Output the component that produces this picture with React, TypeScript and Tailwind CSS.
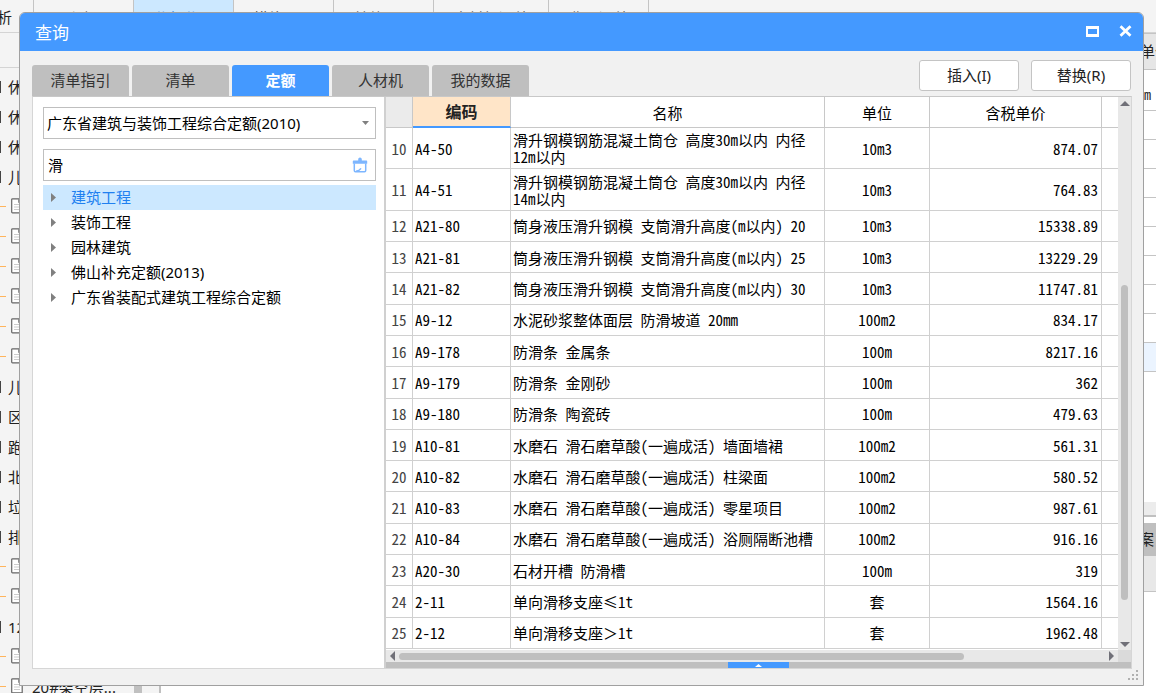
import { useState } from "react";

const UI = "font-['Noto_Sans','Noto_Sans_CJK_SC',sans-serif]";
const MONO = "font-['Noto_Sans_Mono_CJK_SC','Noto_Sans_CJK_SC',monospace]";

const tabs = ["清单指引", "清单", "定额", "人材机", "我的数据"];
const tree = ["建筑工程", "装饰工程", "园林建筑", "佛山补充定额(2013)", "广东省装配式建筑工程综合定额"];

type Row = { n: number; code: string; name: string; unit: string; price: string };
const rows: Row[] = [
  { n: 10, code: "A4-50", name: "滑升钢模钢筋混凝土筒仓 高度30m以内 内径12m以内", unit: "10m3", price: "874.07" },
  { n: 11, code: "A4-51", name: "滑升钢模钢筋混凝土筒仓 高度30m以内 内径14m以内", unit: "10m3", price: "764.83" },
  { n: 12, code: "A21-80", name: "筒身液压滑升钢模 支筒滑升高度(m以内) 20", unit: "10m3", price: "15338.89" },
  { n: 13, code: "A21-81", name: "筒身液压滑升钢模 支筒滑升高度(m以内) 25", unit: "10m3", price: "13229.29" },
  { n: 14, code: "A21-82", name: "筒身液压滑升钢模 支筒滑升高度(m以内) 30", unit: "10m3", price: "11747.81" },
  { n: 15, code: "A9-12", name: "水泥砂浆整体面层 防滑坡道 20mm", unit: "100m2", price: "834.17" },
  { n: 16, code: "A9-178", name: "防滑条 金属条", unit: "100m", price: "8217.16" },
  { n: 17, code: "A9-179", name: "防滑条 金刚砂", unit: "100m", price: "362" },
  { n: 18, code: "A9-180", name: "防滑条 陶瓷砖", unit: "100m", price: "479.63" },
  { n: 19, code: "A10-81", name: "水磨石 滑石磨草酸(一遍成活) 墙面墙裙", unit: "100m2", price: "561.31" },
  { n: 20, code: "A10-82", name: "水磨石 滑石磨草酸(一遍成活) 柱梁面", unit: "100m2", price: "580.52" },
  { n: 21, code: "A10-83", name: "水磨石 滑石磨草酸(一遍成活) 零星项目", unit: "100m2", price: "987.61" },
  { n: 22, code: "A10-84", name: "水磨石 滑石磨草酸(一遍成活) 浴厕隔断池槽", unit: "100m2", price: "916.16" },
  { n: 23, code: "A20-30", name: "石材开槽 防滑槽", unit: "100m", price: "319" },
  { n: 24, code: "2-11", name: "单向滑移支座≤1t", unit: "套", price: "1564.16" },
  { n: 25, code: "2-12", name: "单向滑移支座＞1t", unit: "套", price: "1962.48" },
];

const projectTabs = [
  { label: "工程概况", width: "w-[100px]" },
  { label: "分部分项", width: "w-[100px]" },
  { label: "措施项目", width: "w-[100px]" },
  { label: "其他项目", width: "w-[100px]" },
  { label: "人材机汇总", width: "w-[115px]" },
  { label: "费用汇总", width: "w-[100px]" },
];

const projectTree = [
  "休", "休", "休", "儿", "", "", "", "", "", "", "儿", "区", "跑", "北", "垃", "排", "", "", "12#", "",
];

function Arrow({ className, points }: { className: string; points: string }) {
  return (
    <svg className={className} viewBox="0 0 10 10" preserveAspectRatio="none" aria-hidden="true">
      <polygon points={points} fill="currentColor" />
    </svg>
  );
}

function DocIcon() {
  return (
    <svg className="h-4 w-3 shrink-0" viewBox="0 0 12 16" fill="none" aria-hidden="true">
      <path d="M1.5 .8h6.2l3.5 3.5v10.6H1.5a.8.8 0 0 1-.8-.8V1.6a.8.8 0 0 1 .8-.8Z" fill="#fff" stroke="#666" strokeWidth="1.2" />
      <path d="M7.6 1v3.6h3.5" stroke="#888" />
      <path d="M3 6.5h6M3 9h6M3 11.5h6" stroke="#ccc" />
    </svg>
  );
}

function BrushIcon() {
  return (
    <svg className="h-4 w-4" viewBox="0 0 16 16" fill="none" aria-hidden="true">
      <path d="M6.2 3.6V2.2a1.8 1.8 0 0 1 3.6 0v1.4h4.7c.4 0 .7.3.7.7v2.5H.8V4.3c0-.4.3-.7.7-.7Z" fill="#7db6ff" />
      <path d="M2.3 6.5v7.1c0 .7.4 1.1 1.1 1.1h9.2c.7 0 1.1-.4 1.1-1.1V6.5" stroke="#7db6ff" strokeWidth="1.5" />
      <path d="M4 14.2c2.4-.3 4-1.2 5-2.8" stroke="#7db6ff" strokeWidth="1.5" />
    </svg>
  );
}

function Backdrop() {
  return (
    <div className="flex h-full flex-col bg-[#f4f4f4] text-[15px] text-[#222]">
      <div className="flex h-[33px] shrink-0 border-b border-[#d4d4d4]">
        <div className="flex w-[34px] items-center border-r border-[#c4c4c4] pt-[2px]">
          <span className="-ml-[3px]">析</span>
        </div>
        {projectTabs.map((t, i) => (
          <div
            key={t.label}
            className={`${t.width} border-r border-[#c4c4c4] pt-[10px] text-center leading-[17px] ${
              i === 1 ? "bg-[#cce8ff] text-[#1e7be8]" : "text-[#555]"
            }`}
          >
            {t.label}
          </div>
        ))}
      </div>
      <div className="flex min-h-0 grow">
        <div className="flex w-[161px] shrink-0 flex-col overflow-hidden border-r-2 border-[#c0c0c0]">
          <div className="h-[35px] shrink-0 border-b border-[#d4d4d4]" />
          <div className="h-1 shrink-0" />
          {projectTree.map((t, i) =>
            t ? (
              <div key={i} className="flex h-[30px] shrink-0 items-center gap-[7px]">
                <span className="h-3 w-px bg-[#444]" />
                <span className="leading-5">{t}</span>
              </div>
            ) : (
              <div key={i} className="flex h-[30px] shrink-0 items-center gap-[5px] pb-[2px]">
                <span className="h-px w-[6px] bg-[#ffb45c]" />
                <DocIcon />
              </div>
            ),
          )}
          <div className="flex h-[30px] shrink-0">
            <div className="flex h-[28px] grow items-center gap-[5px]">
              <span className="h-px w-[6px] bg-[#ffb45c]" />
              <DocIcon />
              <span className="ml-1 pt-[2px]">20#架空层...</span>
            </div>
            <div className="mr-[17px] w-[8px] bg-[#c0c0c0]" />
          </div>
        </div>
        <div className="grow bg-white" />
        <div className="flex w-[14px] shrink-0 flex-col overflow-hidden bg-white">
          <div className="flex h-[37px] shrink-0 items-center border-y border-[#c4c4c4] bg-[#e6e6e6] whitespace-nowrap">
            <span className="-ml-[2px]">单位</span>
          </div>
          <div className={`flex h-[41px] shrink-0 items-center border-b border-[#c4c4c4] pl-[2px] pt-2 text-sm ${MONO}`}>m</div>
          {[0, 1, 2, 3, 4, 5, 6, 7].map((i) => (
            <div key={i} className="h-[29px] shrink-0 border-b border-[#c4c4c4]" />
          ))}
          <div className="h-[29px] shrink-0 border-b border-[#c4c4c4] bg-[#ebf4ff]" />
          <div className="h-[130px] shrink-0" />
          <div className="h-[15px] shrink-0 border-b-2 border-[#c0c0c0] bg-[#ececec]" />
          <div className="h-[6px] shrink-0" />
          <div className="flex h-[33px] shrink-0 items-center bg-[#bfbfbf]">
            <span className="-ml-[3px]">案</span>
          </div>
          <div className="h-[36px] shrink-0 border-b border-[#c4c4c4] bg-[#e8e8e8]" />
        </div>
      </div>
    </div>
  );
}

function QuotaTable() {
  const th = "border-r border-b border-[#c8c8c8] p-0 font-normal";
  const td = "border-r border-b border-[#d0d0d0]";
  return (
    <table className={`h-full w-full table-fixed border-separate border-spacing-0 bg-white text-[15px] leading-[17px] text-black ${MONO}`}>
      <colgroup>
        <col className="w-[27px]" />
        <col className="w-[98px]" />
        <col />
        <col className="w-[105px]" />
        <col className="w-[172px]" />
        <col className="w-4" />
      </colgroup>
      <thead>
        <tr className="h-[31px]">
          <th className={`${th} bg-[#ebebeb]`} aria-label="序号" />
          <th className="border-r border-b-2 border-r-[#c8c8c8] border-b-[#4499ff] bg-[#ffe5c8] p-0 text-base leading-[17px] font-bold text-[#222]">编码</th>
          <th className={th}>名称</th>
          <th className={th}>单位</th>
          <th className={th}>含税单价</th>
          <th className="border-b border-[#c8c8c8] p-0" aria-label="更多" />
        </tr>
      </thead>
      <tbody>
        {rows.map((r, i) => (
          <tr key={r.n} className={i < 2 ? "h-[41px]" : "h-[31px]"}>
            <td className={`${td} p-0 text-center text-[#444]`}>{r.n}</td>
            <td className={`${td} py-0 pr-0 pl-[2px]`}>{r.code}</td>
            <td className={`${td} py-0 pr-2 pl-[2px]`}>{r.name}</td>
            <td className={`${td} p-0 text-center`}>{r.unit}</td>
            <td className={`${td} py-0 pr-[3px] pl-0 text-right`}>{r.price}</td>
            <td className="border-b border-[#d0d0d0] p-0" />
          </tr>
        ))}
      </tbody>
    </table>
  );
}

export default function App() {
  const [tab, setTab] = useState("定额");
  const [node, setNode] = useState("建筑工程");
  const [query, setQuery] = useState("滑");

  return (
    <div className={`relative h-screen overflow-hidden ${UI}`}>
      <Backdrop />
      <section
        role="dialog"
        aria-labelledby="dialog-title"
        className="absolute top-3 right-3 bottom-[7px] left-[19px] flex flex-col overflow-hidden rounded-t-md border border-[#a0a0a0] bg-[#f1f1f1] text-[15px]"
      >
        <header className="flex h-[38px] shrink-0 items-center justify-between bg-[#4499ff] pr-[11px] pl-[15px] text-white">
          <h1 id="dialog-title" className="pt-[2px] text-[17px] leading-6">查询</h1>
          <div className="flex items-center gap-5 pb-[2px]">
            <button aria-label="最大化" className="h-[11px] w-[13px] border-[3px] border-x-2 border-white" />
            <button aria-label="关闭">
              <svg className="h-3 w-[13px]" viewBox="0 0 13 12" aria-hidden="true">
                <path d="M1.5 1.2 11.5 10.8M11.5 1.2 1.5 10.8" stroke="#fff" strokeWidth="2.8" />
              </svg>
            </button>
          </div>
        </header>

        <div className="flex h-[45px] shrink-0 items-end justify-between pr-3 pl-3">
          <div role="tablist" className="flex gap-[3px]">
            {tabs.map((t) => (
              <button
                key={t}
                role="tab"
                aria-selected={tab === t}
                onClick={() => setTab(t)}
                className={`h-[31px] w-[97px] rounded-t-[3px] pb-[2px] leading-5 ${
                  tab === t ? "bg-[#4499ff] font-bold text-white" : "bg-[#bfbfbf] text-[#333]"
                }`}
              >
                {t}
              </button>
            ))}
          </div>
          <div className="mb-[5px] flex gap-3">
            {["插入(I)", "替换(R)"].map((b) => (
              <button key={b} className="h-[31px] w-[100px] rounded-[3px] border border-[#c4c4c4] bg-white pb-[2px] leading-5 text-[#222]">
                {b}
              </button>
            ))}
          </div>
        </div>

        <main className="mr-[11px] mb-4 ml-3 flex min-h-0 grow border border-[#d6d6d6] border-t-[#c8c8c8] bg-white">
          <div className="flex w-[351px] shrink-0 flex-col pt-[10px] pr-2 pl-[10px]">
            <div className="relative shrink-0">
              <select aria-label="定额库" className="h-8 w-full appearance-none border border-[#bfbfbf] bg-white pl-[3px] text-[15px] text-black">
                <option>广东省建筑与装饰工程综合定额(2010)</option>
              </select>
              <Arrow className="pointer-events-none absolute top-[14px] right-[7px] h-1 w-[7px] text-[#808080]" points="0,0 10,0 5,10" />
            </div>
            <div className="mt-[10px] flex h-8 shrink-0 items-center border border-[#bfbfbf] pr-[7px] pl-1">
              <input
                aria-label="搜索"
                value={query}
                onChange={(e) => setQuery(e.target.value)}
                className="min-w-0 grow bg-transparent text-black outline-none"
              />
              <button aria-label="清除" onClick={() => setQuery("")}>
                <BrushIcon />
              </button>
            </div>
            <ul className="mt-1">
              {tree.map((t) => (
                <li key={t}>
                  <button
                    onClick={() => setNode(t)}
                    className={`flex h-[25px] w-full items-center gap-[15px] pl-2 text-left leading-5 ${
                      node === t ? "bg-[#cce8ff] text-[#2080f0]" : "text-black"
                    }`}
                  >
                    <Arrow className="h-[9px] w-[5px] text-[#808080]" points="0,0 10,5 0,10" />
                    <span className="pb-[2px]">{t}</span>
                  </button>
                </li>
              ))}
            </ul>
          </div>

          <div className="flex min-w-0 grow flex-col border-l-2 border-[#d0d0d0]">
            <div className="flex min-h-0 grow">
              <div className="min-w-0 grow overflow-hidden pb-px">
                <QuotaTable />
              </div>
              <div className="flex w-[13px] shrink-0 flex-col items-center bg-[#e8e8e8] pt-1 pb-[3px]">
                <Arrow className="h-[5px] w-[10px] text-[#707078]" points="5,0 10,10 0,10" />
                <div className="flex w-full grow flex-col items-center pb-[42px]">
                  <div className="grow-[178]" />
                  <div className="w-[7px] grow-[312] rounded-full bg-[#bfbfbf]" />
                </div>
                <Arrow className="h-[5px] w-[10px] text-[#707078]" points="0,0 10,0 5,10" />
              </div>
            </div>
            <div className="flex h-3 shrink-0 items-center bg-[#e8e8e8] pl-1">
              <Arrow className="h-[10px] w-[5px] text-[#707078]" points="10,0 10,10 0,5" />
              <div className="flex grow px-1">
                <div className="h-[7px] grow-[565] rounded-full bg-[#bfbfbf]" />
                <div className="grow-[141]" />
              </div>
              <Arrow className="mr-1 h-[10px] w-[5px] text-[#707078]" points="0,0 10,5 0,10" />
              <div className="h-full w-[13px] bg-[#dadada]" />
            </div>
            <div className="flex h-[6px] shrink-0 justify-center bg-[#bfbfbf]">
              <button aria-label="展开" className="flex w-[61px] items-center justify-center bg-[#4499ff]">
                <Arrow className="h-[3px] w-[7px] text-white" points="5,0 10,10 0,10" />
              </button>
            </div>
          </div>
        </main>

        <svg className="absolute right-1 bottom-1 h-[11px] w-[11px]" viewBox="0 0 11 11" fill="#b0b0b0" aria-hidden="true">
          <path d="M8 0h2v2H8zM4 4h2v2H4zM8 4h2v2H8zM0 8h2v2H0zM4 8h2v2H4zM8 8h2v2H8z" />
        </svg>
      </section>
    </div>
  );
}
